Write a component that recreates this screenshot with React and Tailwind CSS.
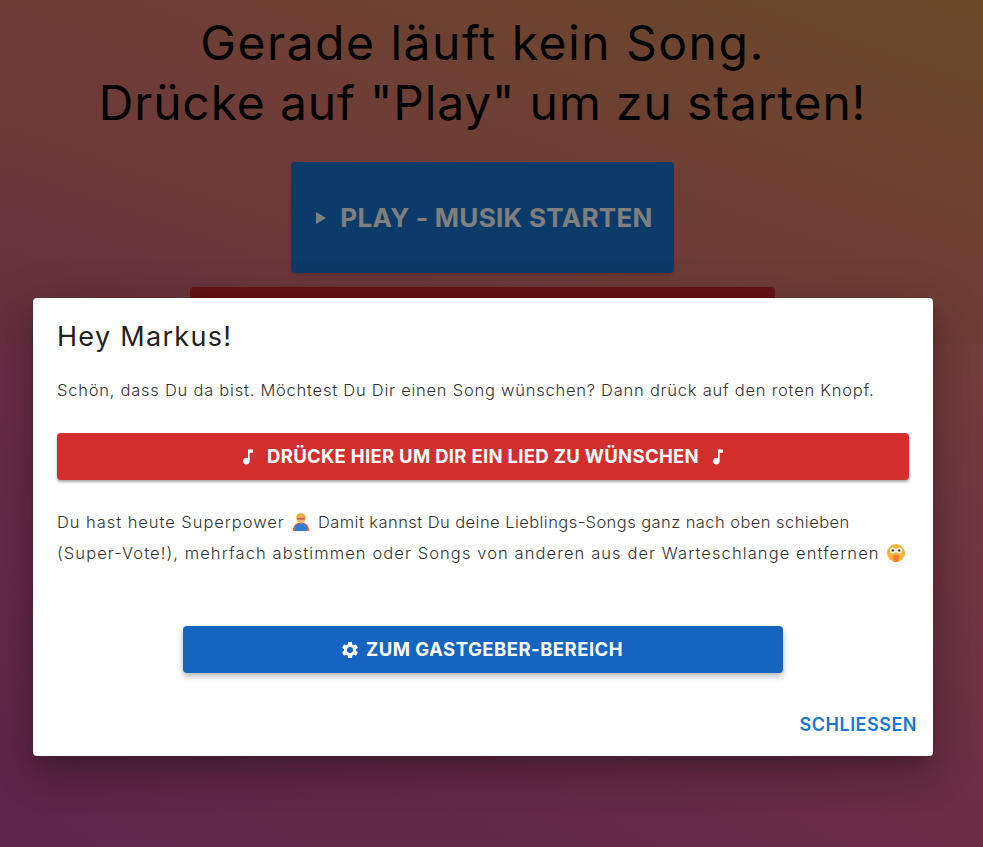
function Note() {
  return (
    <svg viewBox="0 0 24 24" className="w-[20px] h-[20px] fill-white shrink-0">
      <path d="M12 3v10.55A4 4 0 1 0 14 17V7h4V3h-6z" />
    </svg>
  );
}

function Gear() {
  return (
    <svg viewBox="0 0 24 24" className="w-[20px] h-[20px] fill-white shrink-0">
      <path d="M19.14 12.94c.04-.3.06-.61.06-.94 0-.32-.02-.64-.07-.94l2.03-1.58a.49.49 0 0 0 .12-.61l-1.92-3.32a.49.49 0 0 0-.59-.22l-2.39.96c-.5-.38-1.03-.7-1.62-.94l-.36-2.54a.48.48 0 0 0-.48-.41h-3.84a.48.48 0 0 0-.47.41l-.36 2.54c-.59.24-1.13.57-1.62.94l-2.39-.96a.49.49 0 0 0-.59.22L2.74 8.87a.48.48 0 0 0 .12.61l2.03 1.58c-.05.3-.09.63-.09.94s.02.64.07.94l-2.03 1.58a.49.49 0 0 0-.12.61l1.92 3.32c.12.22.37.29.59.22l2.39-.96c.5.38 1.03.7 1.62.94l.36 2.54c.05.24.24.41.48.41h3.84c.24 0 .44-.17.47-.41l.36-2.54c.59-.24 1.13-.56 1.62-.94l2.39.96c.22.08.47 0 .59-.22l1.92-3.32a.48.48 0 0 0-.12-.61l-2.01-1.58zM12 15.6A3.6 3.6 0 1 1 12 8.4a3.6 3.6 0 0 1 0 7.2z" />
    </svg>
  );
}

// the two emoji in the text, drawn because the installed emoji font looks different
function Superhero() {
  return (
    <svg viewBox="0 0 18 18" className="inline-block w-[18px] h-[18px] mx-[3px] align-[-3px]" role="img" aria-label="🦸‍♂️">
      <path d="M1 18c0-5 2-7 5-8h6c3 1 5 3 5 8z" fill="#e5533d" />
      <path d="M3 18c0-5 2-7 4-7.500h4c2 .5 4 2.500 4 7.500z" fill="#2f7fd6" />
      <circle cx="9" cy="5.800" r="4.600" fill="#f4b56a" />
      <path d="M4.200 5.500C3.900 2 6.300.3 9 .3s5.100 1.700 4.800 5.200c-.6-1.500-1.800-2.200-4.800-2.200s-4.200.7-4.800 2.200z" fill="#e9a93c" />
      <rect x="5" y="4.800" width="8" height="2" rx=".8" fill="#d9634c" />
    </svg>
  );
}

function ZanyFace() {
  return (
    <svg viewBox="0 0 18 18" className="inline-block w-[18px] h-[18px] mx-[3px] align-[-3px]" role="img" aria-label="🤪">
      <circle cx="9" cy="9" r="9" fill="#f9b233" />
      <circle cx="5.800" cy="6.500" r="3" fill="#fff" />
      <circle cx="12.200" cy="6.500" r="3" fill="#fff" />
      <circle cx="5.800" cy="6.500" r="1.300" fill="#5a3a22" />
      <circle cx="12.200" cy="6.500" r="1.300" fill="#5a3a22" />
      <path d="M6 11h6l-.4 5.500c-.3 2-4.900 2-5.200 0z" fill="#ee7a3a" />
    </svg>
  );
}

export default function App() {
  return (
    <div className="relative h-[847px] overflow-hidden font-['Inter','Liberation_Sans',sans-serif]">
      {/* page behind the dialog */}
      <div className="h-[344px] bg-[linear-gradient(to_top_right,#cc6080,#de7a6c,#d49454)] pr-[18px]">
        <div className="flex flex-col items-center pt-[13px]">
          <h1 className="text-center text-[48px] leading-[60px] font-normal text-black whitespace-nowrap">
            <span className="tracking-[1.5px]">Gerade läuft kein Song.</span>
            <br />
            <span className="tracking-[0.85px]">Drücke auf "Play" um zu starten!</span>
          </h1>
          <button className="mt-[29px] w-[383px] h-[111px] pl-1 rounded flex items-center justify-center gap-[14px] bg-[#1976d2] text-white text-[26px] font-bold tracking-[0.3px] shadow-md">
            <span className="w-0 h-0 border-y-[6px] border-y-transparent border-l-[10px] border-l-white" />
            PLAY - MUSIK STARTEN
          </button>
          <div className="mt-[14px] w-[585px] h-[60px] rounded bg-[#cc2828]" />
        </div>
      </div>
      <div className="h-[503px] bg-[linear-gradient(to_top_right,#b84c92,#d85a8e,#ea7c7c)]" />

      {/* dimming layer */}
      <div className="absolute inset-0 bg-black/50" />

      {/* dialog */}
      <div className="absolute left-[33px] top-[298px] w-[900px] h-[458px] rounded bg-white shadow-[0_11px_15px_-7px_rgba(0,0,0,0.2),0_24px_38px_3px_rgba(0,0,0,0.14),0_9px_46px_8px_rgba(0,0,0,0.12)] flex flex-col">
        <div className="px-6 pt-[20px]">
          <h2 className="text-[27px] leading-[38px] text-[#212121] font-normal tracking-[1.3px]">Hey Markus!</h2>
          <p className="mt-[20px] text-[16.5px] leading-[28px] font-light text-[#333333] tracking-[0.76px] whitespace-nowrap">
            Schön, dass Du da bist. Möchtest Du Dir einen Song wünschen? Dann drück auf den roten Knopf.
          </p>
          <button className="mt-[29px] w-full h-[47px] rounded bg-[#d32f2f] text-white text-[18.5px] font-bold tracking-[0.3px] flex items-center justify-center gap-[9px] shadow-[0_2px_3px_rgba(0,0,0,0.35)]">
            <Note />
            DRÜCKE HIER UM DIR EIN LIED ZU WÜNSCHEN
            <Note />
          </button>
          <p className="mt-[27px] text-[16.5px] leading-[31px] font-light text-[#333333] whitespace-nowrap">
            <span className="tracking-[0.95px]">Du hast heute Superpower</span> <Superhero />{" "}
            <span className="tracking-[0.44px]">Damit kannst Du deine Lieblings-Songs ganz nach oben schieben</span>
            <br />
            <span className="tracking-[1.09px]">(Super-Vote!), mehrfach abstimmen oder Songs von anderen aus der Warteschlange entfernen</span>{" "}
            <ZanyFace />
          </p>
          <div className="mt-[57px] flex justify-center">
            <button className="w-[600px] h-[47px] pr-[3px] rounded bg-[#1565c0] text-white text-[18.5px] font-bold tracking-[0.47px] flex items-center justify-center gap-[6px] shadow-[0_3px_6px_rgba(0,0,0,0.3)]">
              <Gear />
              ZUM GASTGEBER-BEREICH
            </button>
          </div>
        </div>
        <div className="mt-auto flex justify-end px-4 pb-[18px]">
          <span className="text-[18px] font-semibold tracking-[0.5px] text-[#1976d2]">SCHLIESSEN</span>
        </div>
      </div>
    </div>
  );
}
